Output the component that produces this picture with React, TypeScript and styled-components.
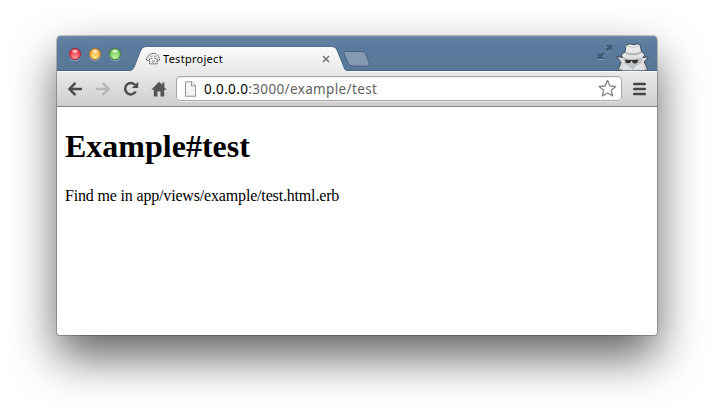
import React from "react";
import styled, { createGlobalStyle } from "styled-components";

const GlobalStyle = createGlobalStyle`
  html, body { margin: 0; padding: 0; background: #fff; overflow: hidden; }
  svg { display: block; flex: none; overflow: visible; }
`;

const Stage = styled.div`
  box-sizing: border-box;
  width: 714px;
  height: 414px;
  padding: 36px 57px 0;
  overflow: hidden;
`;

const BrowserWindow = styled.main`
  width: 600px;
  height: 299px;
  display: flex;
  flex-direction: column;
  overflow: hidden;
  background: #fff;
  border-radius: 4px 4px 3px 3px;
  box-shadow: 0 0 0 1px rgba(0, 0, 0, 0.22), 0 22px 46px rgba(0, 0, 0, 0.62);
`;

const TitleBar = styled.header`
  box-sizing: border-box;
  height: 35px;
  flex: none;
  display: flex;
  align-items: flex-start;
  background: linear-gradient(#6482a3, #5b7b9e 30%, #587798);
  box-shadow: inset 0 1px #7890ab, inset 0 -1px #486585;
`;

const WindowControls = styled.div`
  display: flex;
  gap: 8px;
  padding: 12px 0 0 12px;
  width: 58px;
`;

const ControlButton = styled.span<{ $dark: string; $main: string; $glow: string }>`
  width: 12px;
  height: 12px;
  box-sizing: border-box;
  border-radius: 50%;
  border: 1px solid ${(p) => p.$dark};
  background:
    radial-gradient(ellipse 4px 2.5px at 50% 22%, rgba(255, 255, 255, 0.95), rgba(255, 255, 255, 0) 100%),
    radial-gradient(circle at 50% 90%, ${(p) => p.$glow}, ${(p) => p.$main} 75%, ${(p) => p.$dark} 120%);
  box-shadow: 0 1px 1px rgba(255, 255, 255, 0.4), 0 0 1px rgba(30, 40, 60, 0.6);
`;

const Tab = styled.div`
  position: relative;
  width: 222px;
  height: 35px;
  display: flex;
  align-items: center;
`;

const TabShape = styled.svg`
  position: absolute;
  inset: 0;
`;

const TabContent = styled.div`
  position: relative;
  box-sizing: border-box;
  width: 100%;
  display: flex;
  align-items: center;
  padding: 11px 19px 0 19px;
`;

const TabTitle = styled.span`
  flex: 1;
  margin-left: 3px;
  color: #000;
  font: 11px/14px "Noto Sans", sans-serif;
  letter-spacing: 0.28px;
`;

const NewTab = styled.div`
  padding-top: 15px;
  margin-left: -6px;
`;

const TitleActions = styled.div`
  margin-left: auto;
  padding: 7px 8px 0 0;
  display: flex;
  gap: 4px;
`;

const FullScreen = styled.div`
  padding-top: 2px;
`;

const Toolbar = styled.nav`
  box-sizing: border-box;
  height: 36px;
  flex: none;
  display: flex;
  align-items: center;
  padding: 0 10px 1px;
  background: linear-gradient(#e9e9e9, #cecece);
  border-top: 1px solid #f7f7f7;
  border-bottom: 1px solid #858585;
`;

const NavigationButtons = styled.div`
  display: flex;
  gap: 12px;
  width: 109px;
`;

const AddressBar = styled.div`
  box-sizing: border-box;
  width: 446px;
  height: 25px;
  display: flex;
  align-items: center;
  padding: 0 4px 0 7px;
  border: 1px solid #a8a8a8;
  border-radius: 4px;
  background: #fff;
  box-shadow: inset 0 1px 1px rgba(0, 0, 0, 0.08), 0 1px rgba(255, 255, 255, 0.45);
`;

const Url = styled.span`
  flex: 1;
  margin-left: 7px;
  font: 13.5px/20px "Noto Sans", sans-serif;
  letter-spacing: 0.36px;
  color: #626262;
`;

const Host = styled.span`
  color: #000;
`;

const MenuButton = styled.div`
  margin-left: 11px;
`;

const Page = styled.article`
  flex: 1;
  padding: 0 8px;
  color: #000;
  font: 16px/18px "Liberation Serif", serif;
`;

const Heading = styled.h1`
  margin: 21px 0 0;
  font-size: 32px;
  line-height: 37px;
  font-weight: 700;
`;

const Message = styled.p`
  margin: 22px 0 0;
  letter-spacing: -0.17px;
`;

const Favicon = () => (
  <svg width="14" height="14" viewBox="0 0 14 14" fill="none" stroke="#444" strokeWidth="0.9">
    <path d="M2.5 3.5 5 1.5h5l2 2 1.5 3v1.6l-2 .5M3 3.5.5 6.5v1.6l2.2.5M3.6 6.5v5.4M11 6.5v5.4H4.5" strokeDasharray="1.5 .6" />
    <path d="M4.5 4.2h2M8 4.2h2.5M4.5 6.4h2M8 6.4h2M6 9h3M7 11v-1" stroke="#777" />
  </svg>
);

const BackIcon = ({ color }: { color: string }) => (
  <svg width="16" height="16" viewBox="0 0 16 16" fill="none" stroke={color} strokeWidth="2.5" strokeLinecap="round">
    <path d="M7.7 2.6 2.5 8l5.2 5.4M3 8h10.9" />
  </svg>
);

const ForwardIcon = ({ color }: { color: string }) => (
  <svg width="16" height="16" viewBox="0 0 16 16" fill="none" stroke={color} strokeWidth="2.5" strokeLinecap="round">
    <path d="m8.3 2.6 5.2 5.4-5.2 5.4M13 8H2.1" />
  </svg>
);

const ReloadIcon = () => (
  <svg width="16" height="16" viewBox="0 0 16 16">
    <path d="M12.7 10.7A5.7 5.7 0 1 1 12.2 4" fill="none" stroke="#4d4d4d" strokeWidth="2.5" />
    <path d="M15.2.8v6.3H8.9z" fill="#4d4d4d" />
  </svg>
);

const HomeIcon = () => (
  <svg width="16" height="16" viewBox="0 0 16 16" fill="#555">
    <path d="M8 .8.3 8.8h2.5V15.5h3.7v-5h3v5h3.7V8.8h2.5L13.4 6.5V1.4H11.4v2.4z" />
  </svg>
);

const DocumentIcon = () => (
  <svg width="13" height="16" viewBox="0 0 13 16">
    <path d="M1.5.8h6l4 4v10.4h-10z" fill="#f5f5f5" stroke="#999" strokeWidth="1.1" />
    <path d="M7.5.8v4h4" fill="#fff" stroke="#999" strokeWidth="1.1" />
  </svg>
);

const StarIcon = () => (
  <svg width="19" height="19" viewBox="0 0 19 19">
    <path
      d="M9.5 1.3 11.9 7 17.8 7.4l-4.5 3.9 1.4 5.7-5.2-3-5.2 3 1.4-5.7-4.5-3.9L7.1 7z"
      fill="#fff"
      stroke="#858585"
      strokeWidth="1.3"
      strokeLinejoin="round"
    />
  </svg>
);

const MenuIcon = () => (
  <svg width="13" height="14" viewBox="0 0 13 14" stroke="#454545" strokeWidth="2.7" strokeLinecap="round">
    <path d="M1.3 2h10.4M1.3 7h10.4M1.3 12h10.4" />
  </svg>
);

const FullScreenIcon = () => (
  <svg width="14" height="15" viewBox="0 0 14 15">
    <path d="M7.5 1H14v6.5l-2.2-2.2-2.4 2.4-2-2 2.4-2.4zM0 8.5l2.2 2.2 2.4-2.4 2 2-2.4 2.4L6.5 15H0z" fill="#8ba1ba" />
    <path d="M7.5 0H14v6.5l-2.2-2.2-2.4 2.4-2-2 2.4-2.4zM0 7.5l2.2 2.2 2.4-2.4 2 2-2.4 2.4L6.5 14H0z" fill="#3d5772" />
  </svg>
);

const IncognitoIcon = () => (
  <svg width="33" height="28" viewBox="0 0 33 28">
    <defs>
      <linearGradient id="hat" x1="0" y1="0" x2="0" y2="1">
        <stop stopColor="#f0f0f0" />
        <stop offset="1" stopColor="#d2d3d4" />
      </linearGradient>
    </defs>
    <path
      d="M.8 13.5 6.8 14.5 5 11.8 9 9l1-6.8L14 .8l3.5 1L22 .7l2.4 2 1.1 6 3.5 2.8-2 3 5.3-.7-4 5.2L32 27.2H2l3-7.7z"
      fill="url(#hat)"
      stroke="#3d4c5b"
      strokeWidth="1"
      strokeLinejoin="round"
    />
    <path d="M9.3 8.5c4.5 2.2 11 2.2 16 0l.2 1.8c-4.8 2.5-11.6 2.5-16.5 0z" fill="#b0b3b6" />
    <path d="M6.8 14.5c5 1.8 15 1.8 20.2 0l-2.2 7.2-6 5.5h-5l-5.5-6z" fill="#bfc1c3" />
    <path d="M9 16.4c4 .9 9.6.9 13.2 0-.2 2.5-1.2 3.9-3.2 4-1.6.1-2.6-.8-3.1-2.3h-.8c-.5 1.5-1.6 2.3-3 2.2-2-.2-3-1.6-3.1-3.9z" fill="#333" />
    <path d="m8.3 20.4 5 3.2 3.2 3.6H6zM26 19.6l-6.8 4.2-2.5 3.4h12z" fill="#e1e2e2" />
    <path d="m9 3 4 .5 3.5 1.2L24 2.8" fill="none" stroke="#bfc1c3" strokeWidth=".8" />
  </svg>
);

export default function App() {
  return (
    <>
      <GlobalStyle />
      <Stage>
        <BrowserWindow>
          <TitleBar>
            <WindowControls>
              <ControlButton $dark="#b32435" $main="#e62a3b" $glow="#ffa0a0" />
              <ControlButton $dark="#b77626" $main="#f2a83b" $glow="#fff08a" />
              <ControlButton $dark="#438a3c" $main="#67c455" $glow="#c8f8a3" />
            </WindowControls>
            <Tab>
              <TabShape width="222" height="36" viewBox="0 0 222 36">
                <defs>
                  <linearGradient id="tab-fill" x1="0" y1="11" x2="0" y2="36" gradientUnits="userSpaceOnUse">
                    <stop stopColor="#fafafa" />
                    <stop offset="1" stopColor="#e9e9e9" />
                  </linearGradient>
                </defs>
                <path
                  d="M0 36V35c5 0 6.5-1.2 8.2-5.5l5.5-13.8C15.2 12 16.3 11 20 11h184c3.7 0 4.8 1 6.3 4.7l5.5 13.8c1.7 4.3 2 5.5 6.2 5.5v1z"
                  fill="url(#tab-fill)"
                />
                <path
                  d="M0 34.5c5 0 6-1.2 7.7-5.5l5.5-13.8C14.8 11.4 15.8 10.5 20 10.5h184c4.2 0 5.2.9 6.8 4.7l5.5 13.8c1.7 4.3 1.7 5.5 5.7 5.5"
                  fill="none"
                  stroke="#4c6784"
                  strokeWidth="0.7"
                />
              </TabShape>
              <TabContent>
                <Favicon />
                <TabTitle>Testproject</TabTitle>
                <svg width="8" height="8" viewBox="0 0 8 8" stroke="#747474" strokeWidth="1.5">
                  <path d="m1 1 6 6M7 1 1 7" />
                </svg>
              </TabContent>
            </Tab>
            <NewTab>
              <svg width="28" height="17" viewBox="0 0 28 17">
                <path
                  d="M3 .5h15.5c2.8 0 3.6 1 4.5 3.2l3 8c.8 2.2.6 3.3-1.7 3.3H10c-3 0-4.2-1-5.2-3.4L1.6 4C.8 1.8.7.5 3 .5z"
                  fill="#839ab2"
                  stroke="#48617c"
                />
              </svg>
            </NewTab>
            <TitleActions>
              <FullScreen><FullScreenIcon /></FullScreen>
              <IncognitoIcon />
            </TitleActions>
          </TitleBar>
          <Toolbar>
            <NavigationButtons>
              <BackIcon color="#4b4b4b" />
              <ForwardIcon color="#b7b7b7" />
              <ReloadIcon />
              <HomeIcon />
            </NavigationButtons>
            <AddressBar>
              <DocumentIcon />
              <Url><Host>0.0.0.0</Host>:3000/example/test</Url>
              <StarIcon />
            </AddressBar>
            <MenuButton><MenuIcon /></MenuButton>
          </Toolbar>
          <Page>
            <Heading>Example#test</Heading>
            <Message>Find me in app/views/example/test.html.erb</Message>
          </Page>
        </BrowserWindow>
      </Stage>
    </>
  );
}
